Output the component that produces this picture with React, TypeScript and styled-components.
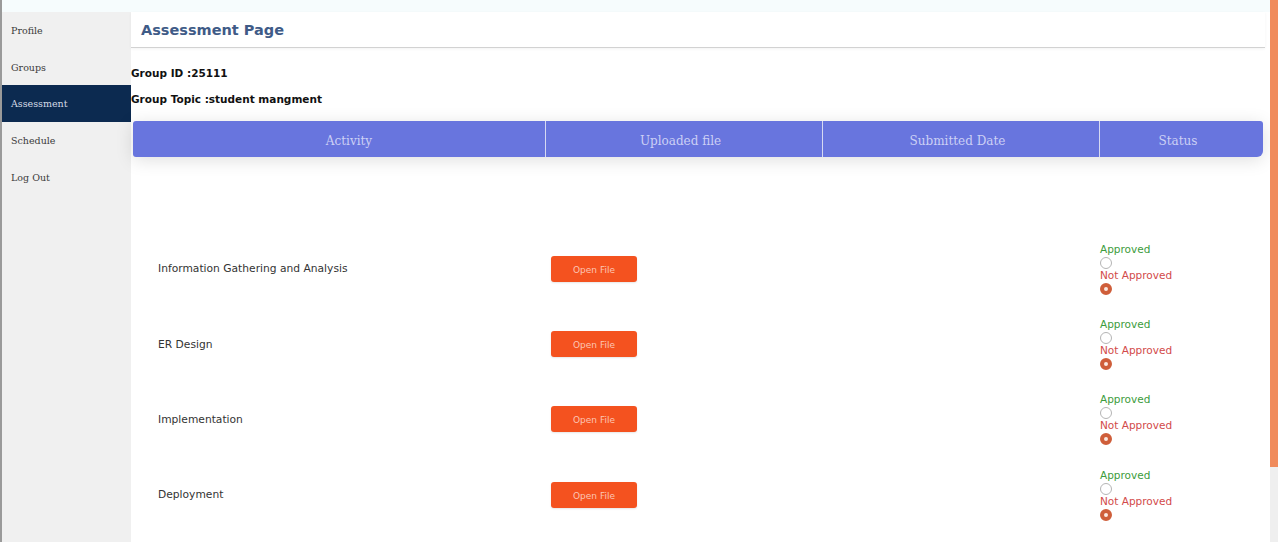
import React from "react";
import styled, { createGlobalStyle } from "styled-components";

const GlobalStyle = createGlobalStyle`
  html, body { margin: 0; padding: 0; background: #ffffff; overflow: hidden; }
  body { font-family: "DejaVu Sans", sans-serif; }
`;

const Frame = styled.div`
  height: 100vh;
  display: flex;
  border-left: 2px solid #9a9a9a;
  box-sizing: border-box;
  overflow: hidden;
`;

const Page = styled.div`
  flex: 1;
  min-width: 0;
  display: flex;
  flex-direction: column;
`;

const ScrollTrack = styled.div`
  width: 8px;
  flex: none;
  background: #efefef;
  display: flex;
  flex-direction: column;
`;

const ScrollThumb = styled.div`
  height: 467px;
  background: #f08b5c;
`;

const TopStrip = styled.div`
  height: 12px;
  flex: none;
  background: #f6fcfd;
`;

const Layout = styled.div`
  flex: 1;
  display: grid;
  grid-template-columns: 129px 1fr;
`;

const Sidebar = styled.nav`
  background: #f0f0f0;
  display: flex;
  flex-direction: column;
`;

const NavItem = styled.div<{ $active?: boolean }>`
  height: 36.7px;
  display: flex;
  align-items: center;
  padding-left: 9px;
  font-family: "DejaVu Serif", serif;
  font-size: 9.5px;
  color: ${(p) => (p.$active ? "#d4dae6" : "#3a3a3a")};
  background: ${(p) => (p.$active ? "#0c2a50" : "transparent")};
`;

const Main = styled.main`
  padding-right: 5px;
  display: flex;
  flex-direction: column;
`;

const PageHeader = styled.header`
  height: 35px;
  border-bottom: 1px solid #d2d2d2;
  box-shadow: 0 1px 3px rgba(0, 0, 0, 0.05);
  display: flex;
  align-items: center;
  padding-left: 10px;
  font-family: "DejaVu Sans", sans-serif;
  font-weight: bold;
  font-size: 14.5px;
  color: #3f5b87;
`;

const Info = styled.div`
  margin-top: 18px;
  display: flex;
  flex-direction: column;
  gap: 12px;
  font-family: "DejaVu Sans", sans-serif;
  font-weight: bold;
  font-size: 10.5px;
  line-height: 14px;
  color: #111;
`;

const TableHead = styled.div`
  margin: 15px 2px 0 2px;
  height: 36px;
  display: grid;
  grid-template-columns: 413px 277px 277px 1fr;
  background: #6875de;
  border-radius: 3px 3px 6px 3px;
  box-shadow: 0 3px 18px rgba(0, 0, 0, 0.13);
  overflow: hidden;
`;

const HeadCell = styled.div<{ $last?: boolean; $shift: number }>`
  display: flex;
  align-items: center;
  justify-content: center;
  padding-top: 3px;
  padding-left: ${(p) => (p.$shift > 0 ? p.$shift : 0)}px;
  padding-right: ${(p) => (p.$shift < 0 ? -p.$shift : 0)}px;
  font-family: "DejaVu Serif", serif;
  font-size: 12px;
  color: #ccd0f5;
  border-right: ${(p) => (p.$last ? "none" : "1px solid #d6d9f2")};
`;

const Rows = styled.div`
  margin: 74px 2px 0 2px;
  display: flex;
  flex-direction: column;
`;

const Row = styled.div`
  height: 75.4px;
  display: grid;
  grid-template-columns: 413px 277px 277px 1fr;
  align-items: center;
`;

const ActivityCell = styled.div`
  padding-left: 25px;
  font-family: "DejaVu Sans", sans-serif;
  font-size: 10.7px;
  color: #333;
`;

const FileCell = styled.div`
  padding-left: 5px;
`;

const OpenButton = styled.button`
  width: 86px;
  height: 26px;
  border: none;
  border-radius: 3px;
  background: #f4521f;
  color: #fcc5b4;
  font-family: "DejaVu Sans", sans-serif;
  font-size: 9px;
  padding: 2px 0 0 0;
  box-shadow: 0 1px 2px rgba(0, 0, 0, 0.1);
`;

const StatusCell = styled.div`
  display: flex;
  flex-direction: column;
  align-items: flex-start;
  font-family: "DejaVu Sans", sans-serif;
  font-size: 10.5px;
  line-height: 13px;
`;

const StatusLabel = styled.span<{ $ok?: boolean }>`
  color: ${(p) => (p.$ok ? "#3c9c3c" : "#d24a4a")};
`;

const Radio = styled.span<{ $checked?: boolean }>`
  width: 12px;
  height: 12px;
  box-sizing: border-box;
  border-radius: 50%;
  margin: 1px 0 0 0;
  display: block;
  border: ${(p) => (p.$checked ? "4px solid #cf5e3a" : "1px solid #b5b5b5")};
  background: ${(p) => (p.$checked ? "#fbe9e2" : "#fff")};
`;

const activities = [
  "Information Gathering and Analysis",
  "ER Design",
  "Implementation",
  "Deployment",
];

export default function App() {
  return (
    <>
      <GlobalStyle />
      <Frame>
        <Page>
          <TopStrip />
          <Layout>
            <Sidebar>
              <NavItem>Profile</NavItem>
              <NavItem>Groups</NavItem>
              <NavItem $active>Assessment</NavItem>
              <NavItem>Schedule</NavItem>
              <NavItem>Log Out</NavItem>
            </Sidebar>
            <Main>
              <PageHeader>Assessment Page</PageHeader>
              <Info>
                <div>Group ID :25111</div>
                <div>Group Topic :student mangment</div>
              </Info>
              <TableHead>
                <HeadCell $shift={20}>Activity</HeadCell>
                <HeadCell $shift={-7}>Uploaded file</HeadCell>
                <HeadCell $shift={-7}>Submitted Date</HeadCell>
                <HeadCell $shift={-7} $last>
                  Status
                </HeadCell>
              </TableHead>
              <Rows>
                {activities.map((a) => (
                  <Row key={a}>
                    <ActivityCell>{a}</ActivityCell>
                    <FileCell>
                      <OpenButton>Open File</OpenButton>
                    </FileCell>
                    <div />
                    <StatusCell>
                      <StatusLabel $ok>Approved</StatusLabel>
                      <Radio />
                      <StatusLabel>Not Approved</StatusLabel>
                      <Radio $checked />
                    </StatusCell>
                  </Row>
                ))}
              </Rows>
            </Main>
          </Layout>
        </Page>
        <ScrollTrack>
          <ScrollThumb />
        </ScrollTrack>
      </Frame>
    </>
  );
}
